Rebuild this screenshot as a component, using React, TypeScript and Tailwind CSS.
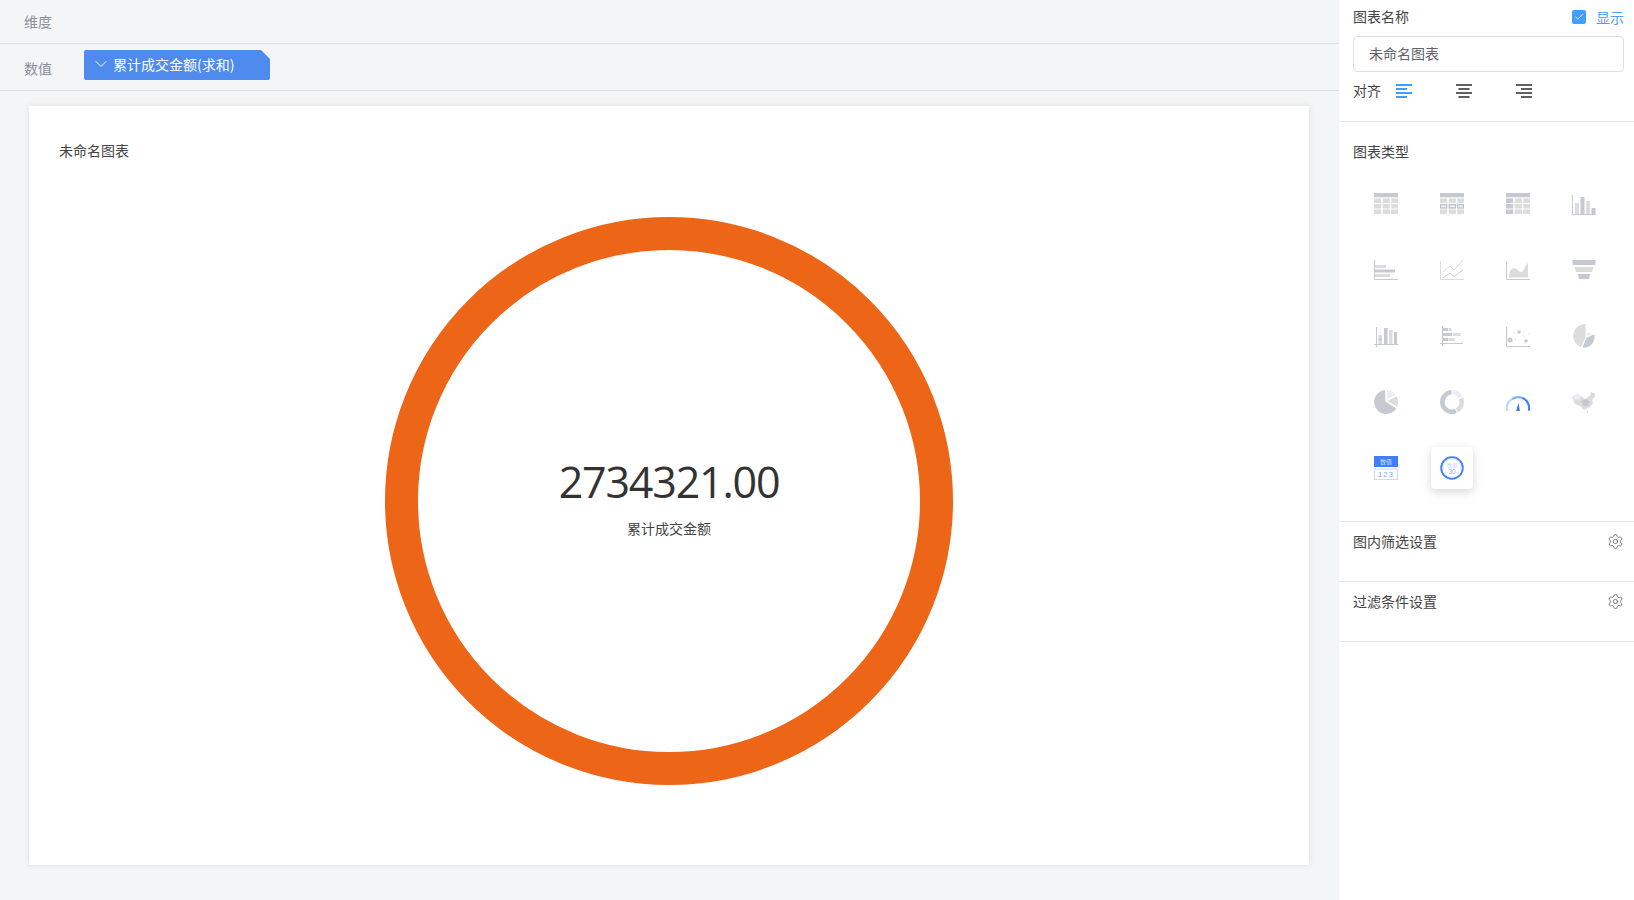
import React from "react";
import { Settings, ChevronDown, Check } from "lucide-react";

const A = "#c5cad2";
const B = "#dcdcdc";
const C = "#e9edf6";

const Svg = ({ children }: { children: React.ReactNode }) => (
  <svg width="24" height="24" viewBox="0 0 24 24" className="block">{children}</svg>
);

const cols = [0, 8.7, 17.2];
const rows = [6.5, 12, 17.5];

const Table = ({ variant }: { variant: number }) => (
  <Svg>
    <rect x="0" y="1" width="24" height="4.3" fill={A} />
    {rows.map((y, r) =>
      cols.map((x, c) => {
        const dark = variant === 2 && c === 0;
        return (
          <g key={`${r}-${c}`}>
            <rect x={x} y={y} width={c === 2 ? 6.8 : 7.2} height="4.5" fill={dark ? A : B} />
            {variant === 1 && r === 1 && (
              <rect x={x + 0.5} y={y + 0.5} width={c === 2 ? 5.8 : 6.2} height="3.5" fill="#e6e8ee" stroke="#b9bfc9" strokeWidth="1" />
            )}
          </g>
        );
      })
    )}
  </Svg>
);

const icons: React.ReactNode[] = [
  <Table variant={0} />,
  <Table variant={1} />,
  <Table variant={2} />,
  <Svg>
    <path d="M0.5 3V22.5H24" fill="none" stroke={A} />
    <rect x="3" y="11" width="4" height="11" fill={B} />
    <rect x="8.5" y="5" width="4" height="17" fill={A} />
    <rect x="14" y="9" width="4" height="13" fill={B} />
    <rect x="19.5" y="16" width="4" height="6" fill={A} />
  </Svg>,
  <Svg>
    <path d="M0.5 2V21.500H24" fill="none" stroke={A} />
    <rect x="1" y="7" width="11" height="3" fill={B} />
    <rect x="1" y="11.500" width="20" height="3" fill={A} />
    <rect x="1" y="16" width="15" height="3" fill={B} />
  </Svg>,
  <Svg>
    <path d="M0.5 3V21.500H24" fill="none" stroke={B} />
    <path d="M3 14L10 8L14 12L23 2" fill="none" stroke={B} />
    <path d="M3 20L10 15L14 18.500L23 12" fill="none" stroke="#c9cdd6" />
  </Svg>,
  <Svg>
    <path d="M0.5 3V21.500H24" fill="none" stroke={A} />
    <path d="M3 19.500C3 14 5 10 8 10C11 10 12 14 15 14C18 14 19 7 22 5V19.500Z" fill={B} />
  </Svg>,
  <Svg>
    <path d="M0 2H24L23 7H1Z" fill={A} />
    <path d="M2.500 9H21.500L20 14H4Z" fill={B} />
    <path d="M6 16H18L17 21H7Z" fill={A} />
  </Svg>,
  <Svg>
    <path d="M2.500 3V23M0 20.500H24" fill="none" stroke={A} />
    <rect x="4.500" y="11" width="3.500" height="9" fill={B} />
    <rect x="4.500" y="14.500" width="3.500" height="2" fill={A} />
    <rect x="10" y="4" width="3.500" height="16" fill={A} />
    <rect x="15" y="6" width="3.500" height="14" fill={B} />
    <rect x="20" y="8" width="3" height="12" fill={A} />
  </Svg>,
  <Svg>
    <path d="M2.500 2V22M0 19.500H23" fill="none" stroke={A} />
    <rect x="3" y="4" width="5" height="3" fill={A} /><rect x="8.500" y="4" width="3" height="3" fill={B} />
    <rect x="3" y="9" width="9" height="3" fill={A} /><rect x="12.500" y="9" width="8" height="3" fill={B} />
    <rect x="3" y="14" width="5" height="3" fill={A} /><rect x="8.500" y="14" width="6" height="3" fill={B} />
  </Svg>,
  <Svg>
    <path d="M0.500 3V22.500H24" fill="none" stroke={A} />
    <circle cx="4" cy="16" r="2.500" fill={A} />
    <circle cx="13" cy="8" r="1.800" fill={A} />
    <circle cx="20" cy="17" r="1.800" fill={A} />
    <circle cx="8" cy="9" r="0.700" fill={B} /><circle cx="9" cy="15" r="0.700" fill={B} />
    <circle cx="17" cy="12" r="0.700" fill={B} /><circle cx="23" cy="10" r="0.700" fill={B} />
  </Svg>,
  <Svg>
    <path d="M13.500 0V12.500L9 23.200A12 12 0 0 1 13.500 0Z" fill={B} />
    <path d="M14.800 8.500V12.500L20 10.500A6 6 0 0 0 14.800 8.500Z" fill={C} />
    <path d="M14.500 13.800L22.300 10.300A11 11 0 0 1 10.500 23.600Z" fill={A} />
  </Svg>,
  <Svg>
    <path d="M11 0A12 12 0 1 0 22.300 18.400L11.400 11.600Z" fill={A} />
    <path d="M13 0.100V9.300L21.600 4.900A12 12 0 0 0 13 0.100Z" fill={C} />
    <path d="M13.500 11L22.600 6.300A12 12 0 0 1 23.200 16.400Z" fill={B} />
  </Svg>,
  <Svg>
    <g transform="rotate(-90 12 12)" fill="none" strokeWidth="4.600">
      <circle cx="12" cy="12" r="9.700" pathLength="360" stroke={C} strokeDasharray="58 360" strokeDashoffset="-4" />
      <circle cx="12" cy="12" r="9.700" pathLength="360" stroke={B} strokeDasharray="82 360" strokeDashoffset="-68" />
      <circle cx="12" cy="12" r="9.700" pathLength="360" stroke={A} strokeDasharray="202 360" strokeDashoffset="-156" />
    </g>
  </Svg>,
  <Svg>
    <path d="M1.200 20.700A11 11 0 0 1 6 9" fill="none" stroke="#bcd8fd" strokeWidth="2.200" />
    <path d="M6 9A11 11 0 0 1 16 7.800" fill="none" stroke="#7db2fb" strokeWidth="2.200" />
    <path d="M16 7.800A11 11 0 0 1 22.800 20.700" fill="none" stroke="#3f83f8" strokeWidth="2.200" />
    <path d="M10.200 21L12.500 12.700L13.800 21Z" fill="#2f76f0" />
  </Svg>,
  <Svg>
    <path d="M0 7L5 3.500L9 6L13 9L18 6L19 2L23 3.500L23 7L20 10L21 13L18 17L12 20L8 16L3 14Z" fill={B} />
    <path d="M0 7L5 3.500L9 6.500L8 9L4 10Z" fill={C} />
    <path d="M9 11L15 9L18 12L16 16L11 16Z" fill={A} />
    <circle cx="15.500" cy="22" r="0.700" fill={A} />
  </Svg>,
  <Svg>
    <rect x="0" y="0" width="24" height="11" fill="#3f7ef7" />
    <text x="12" y="8" textAnchor="middle" fontSize="6" fill="#cfe0ff" fontFamily="'Noto Sans CJK SC',sans-serif">数值</text>
    <rect x="0.500" y="13" width="23" height="10.500" fill="#fff" stroke="#c7dafc" />
    <text x="12" y="21" textAnchor="middle" fontSize="7.500" letterSpacing="1.200" fill="#7fa6f2" fontFamily="'Liberation Sans',sans-serif">123</text>
  </Svg>,
  <Svg>
    <circle cx="12" cy="12" r="10.800" fill="#f8faff" stroke="#3f7ef7" strokeWidth="1.800" />
    <circle cx="12" cy="12" r="9" fill="#fff" stroke="#e4edfe" strokeWidth="1" />
    <text x="12" y="11" textAnchor="middle" fontSize="5" fill="#c3d7fc" fontFamily="'Noto Sans CJK SC',sans-serif">数值</text>
    <text x="12" y="17.500" textAnchor="middle" fontSize="6.500" fill="#8cb0f5" fontFamily="'Liberation Sans',sans-serif">30</text>
  </Svg>,
];

const AlignIcon = ({ kind, color }: { kind: "l" | "c" | "r"; color: string }) => {
  const sx = kind === "l" ? 0 : kind === "c" ? 2.5 : 5;
  return (
    <svg width="16" height="14" viewBox="0 0 16 14" className="block">
      <rect x="0" y="0" width="16" height="2" fill={color} />
      <rect x={sx} y="4" width="11" height="2" fill={color} />
      <rect x="0" y="8" width="16" height="2" fill={color} />
      <rect x={sx} y="12" width="11" height="2" fill={color} />
    </svg>
  );
};

const font = { fontFamily: "'Noto Sans CJK SC','Noto Sans',sans-serif" };

export default function App() {
  return (
    <div className="flex h-[900px] w-[1634px] overflow-hidden bg-[#f3f5f7] text-[14px] text-[#444]" style={font}>
      <main className="flex w-[1339px] flex-col">
        <div className="flex h-[44px] items-center border-b border-[#dcdfe3] pl-6 text-[#8a909c]">维度</div>
        <div className="flex h-[47px] items-start border-b border-[#dcdfe3] pl-6 text-[#8a909c]">
          <span className="mt-[14px] leading-[20px]">数值</span>
          <div className="ml-8 mt-[6px] flex h-[30px] w-[186px] items-center rounded-[2px] bg-[#4f8bee] pl-[7px] text-white [clip-path:polygon(0_0,calc(100%-9px)_0,100%_9px,100%_100%,0_100%)]">
            <ChevronDown size={20} strokeWidth={1.2} className="mr-[2px] -mt-[2px]" />
            <span className="-mt-[3px] leading-[20px] whitespace-nowrap">累计成交金额(求和)</span>
          </div>
        </div>
        <div className="ml-[29px] mt-[15px] flex h-[759px] w-[1280px] flex-col bg-white shadow-[0_0_6px_rgba(0,0,0,0.1)]">
          <div className="h-[111px] pl-[30px] pt-[33px] leading-[22px] text-[#444]">未命名图表</div>
          <div className="flex justify-center">
            <div className="relative h-[568px] w-[568px]">
              <svg width="568" height="568" viewBox="0 0 568 568" className="block">
                <circle cx="284" cy="284" r="267.500" fill="none" stroke="#ed6517" strokeWidth="33" />
              </svg>
              <div className="absolute inset-x-0 top-[233px] flex flex-col items-center">
                <div className="text-[43px] leading-[64px] tracking-[-1.2px] text-[#333] whitespace-nowrap" style={{ fontFamily: "'Open Sans','Noto Sans',sans-serif" }}>2734321.00</div>
                <div className="mt-[3px] text-[14px] leading-[22px] text-[#444]">累计成交金额</div>
              </div>
            </div>
          </div>
        </div>
      </main>
      <aside className="flex w-[295px] flex-col bg-white">
        <div className="h-[122px] border-b border-[#e6e8eb] px-[14px] pr-[10px]">
          <div className="flex h-[34px] items-center justify-between">
            <span className="-mt-[2px] leading-[20px]">图表名称</span>
            <div className="flex items-center text-[#4c9dfb]">
              <span className="flex h-[14px] w-[14px] items-center justify-center rounded-[2px] bg-[#409eff]">
                <Check size={10} strokeWidth={2} color="#fff" />
              </span>
              <span className="ml-[10px] leading-[20px]">显示</span>
            </div>
          </div>
          <div className="mt-[2px] flex h-[36px] items-center rounded-[4px] border border-[#dcdfe6] pb-[2px] pl-[15px] text-[#606266]">未命名图表</div>
          <div className="mt-[8px] flex h-[24px] items-center">
            <span className="-mt-[4px] w-[43px] leading-[20px]">对齐</span>
            <div className="-mt-[2px] flex gap-[44px]">
              <AlignIcon kind="l" color="#409eff" />
              <AlignIcon kind="c" color="#606060" />
              <AlignIcon kind="r" color="#606060" />
            </div>
          </div>
        </div>
        <div className="h-[400px] border-b border-[#e6e8eb] pl-[14px]">
          <div className="pt-[19px] leading-[20px]">图表类型</div>
          <div className="mt-[10px] grid w-[264px] grid-cols-[repeat(4,66px)] grid-rows-[repeat(5,66px)]">
            {icons.map((icon, i) => (
              <div key={i} className="flex items-center justify-center">
                <div className={i === 17 ? "flex h-[42px] w-[42px] items-center justify-center rounded-[4px] bg-white shadow-[0_3px_10px_rgba(0,0,0,0.16)]" : ""}>
                  {icon}
                </div>
              </div>
            ))}
          </div>
        </div>
        {["图内筛选设置", "过滤条件设置"].map((t) => (
          <div key={t} className="flex h-[60px] items-start justify-between border-b border-[#e6e8eb] pl-[14px] pr-[10px] pt-[9px]">
            <span className="leading-[20px]">{t}</span>
            <Settings size={17} strokeWidth={1.2} color="#666" className="mt-[2px]" />
          </div>
        ))}
      </aside>
    </div>
  );
}
